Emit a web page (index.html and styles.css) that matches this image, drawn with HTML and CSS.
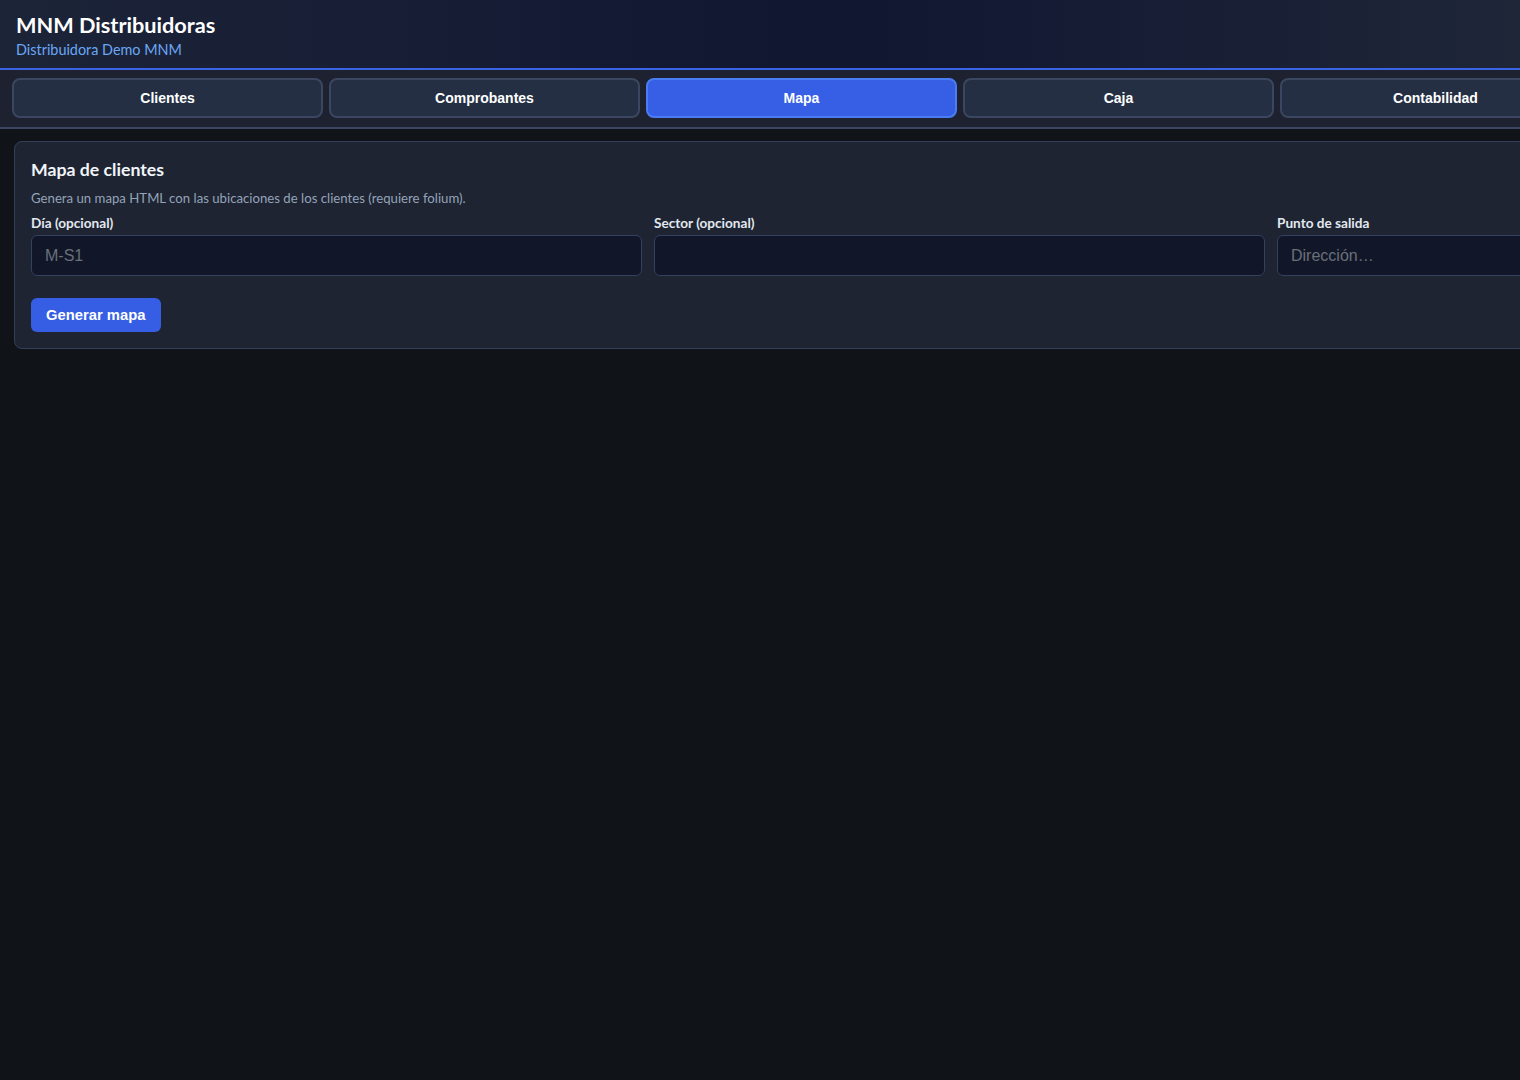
FILE: index.html
```html
<!DOCTYPE html>
<html lang="es">
<head>
  <meta charset="UTF-8">
  <meta name="viewport" content="width=device-width, initial-scale=1.0">
  <title>MNM Distribuidoras</title>
  <link rel="stylesheet" href="styles.css">
</head>
<body>
  <header class="topbar">
    <h1>MNM Distribuidoras</h1>
    <p class="subtitle">Distribuidora Demo MNM</p>
  </header>

  <nav class="tabs">
    <button class="tab">Clientes</button>
    <button class="tab">Comprobantes</button>
    <button class="tab active">Mapa</button>
    <button class="tab">Caja</button>
    <button class="tab">Contabilidad</button>
  </nav>

  <main class="main">
    <section class="card">
      <h2>Mapa de clientes</h2>
      <p class="hint">Genera un mapa HTML con las ubicaciones de los clientes (requiere folium).</p>
      <form class="map-form">
        <div class="fields">
          <div class="field">
            <label for="dia">Día (opcional)</label>
            <input type="text" id="dia" placeholder="M-S1">
          </div>
          <div class="field">
            <label for="sector">Sector (opcional)</label>
            <input type="text" id="sector">
          </div>
          <div class="field">
            <label for="salida">Punto de salida</label>
            <input type="text" id="salida" placeholder="Dirección…">
          </div>
        </div>
        <button type="submit" class="primary">Generar mapa</button>
      </form>
    </section>
  </main>
</body>
</html>
```

FILE: styles.css
```css
body {
  margin: 0;
  background: #101418;
  font-family: Lato, "Noto Sans", sans-serif;
  color: #e5e7eb;
  overflow: hidden;
}
.topbar {
  padding: 12px 16px 9px;
  background: linear-gradient(to right, #1c2438, #111631 55%, #1e2638);
  border-bottom: 2px solid #3b63e6;
}
.topbar h1 {
  margin: 0;
  font-size: 21.7px;
  line-height: 26px;
  font-weight: 700;
  color: #ffffff;
}
.subtitle {
  margin: 3px 0 0;
  font-size: 14.4px;
  line-height: 18px;
  color: #6aa7f5;
}
.tabs {
  display: flex;
  gap: 6px;
  padding: 8px 12px 9px;
  background: #1e2230;
  border-bottom: 2px solid #3c4660;
}
.tab {
  flex: 0 0 311px;
  height: 40px;
  background: #242f44;
  border: 2px solid #3b4660;
  border-radius: 8px;
  color: #ffffff;
  font-family: "Liberation Sans", Arial, sans-serif;
  font-size: 14px;
  font-weight: 700;
  cursor: pointer;
}
.tab.active {
  background: #375fe5;
  border-color: #4a7cf3;
}
.main {
  padding: 12px 14px;
}
.card {
  width: 1891px;
  box-sizing: border-box;
  padding: 15px 16px 16px;
  background: #1e2432;
  border: 1px solid #34405a;
  border-radius: 8px;
}
.card h2 {
  margin: 0;
  font-size: 17.7px;
  line-height: 25px;
  font-weight: 700;
  color: #f1f5f9;
}
.hint {
  margin: 8px 0 0;
  font-size: 13.2px;
  line-height: 16px;
  color: #94a3b8;
}
.fields {
  display: grid;
  grid-template-columns: repeat(3, 611px);
  gap: 12px;
  margin-top: 9px;
}
.field label {
  display: block;
  font-size: 13.6px;
  line-height: 16px;
  font-weight: 700;
  color: #e2e8f0;
  margin-bottom: 4px;
}
.field input {
  width: 100%;
  height: 41px;
  box-sizing: border-box;
  padding: 0 13px;
  background: #111729;
  border: 1px solid #334160;
  border-radius: 6px;
  color: #e5e7eb;
  font-family: "Liberation Sans", Arial, sans-serif;
  font-size: 16px;
}
.field input::placeholder {
  color: #6b6f78;
}
.primary {
  margin-top: 22px;
  height: 34px;
  padding: 0 15px;
  background: #365ee5;
  border: none;
  border-radius: 6px;
  color: #ffffff;
  font-family: "Liberation Sans", Arial, sans-serif;
  font-size: 14.8px;
  font-weight: 700;
  cursor: pointer;
}
```
